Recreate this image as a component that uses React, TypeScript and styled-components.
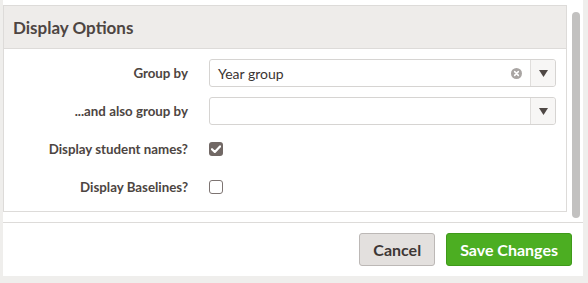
import React, { useState } from "react";
import styled, { createGlobalStyle } from "styled-components";

const GlobalStyle = createGlobalStyle`
   html, body {
      margin: 0;
      padding: 0;
      background: #efeeec;
      font-family: "Lato", "Liberation Sans", sans-serif;
      color: #4d4542;
   }
`;

type SelectProps = {
   value: string;
   clearable?: boolean;
};

function SelectBox({ value, clearable }: SelectProps) {
   return (
      <StyledSelect>
         <div className="value">{value}</div>
         {clearable && value && (
            <ClearIcon viewBox="0 0 12 12" aria-label="clear">
               <circle cx="6" cy="6" r="6" fill="#a9a5a3" />
               <path d="M4 4 L8 8 M8 4 L4 8" stroke="#fff" strokeWidth="1.7" strokeLinecap="round" />
            </ClearIcon>
         )}
         <StyledArrow>
            <svg width="9" height="7" viewBox="0 0 9 7">
               <path d="M0 0 H9 L4.5 7 Z" fill="#4f4845" />
            </svg>
         </StyledArrow>
      </StyledSelect>
   );
}

function Checkbox({ checked, onToggle }: { checked: boolean; onToggle: () => void }) {
   return (
      <StyledCheckbox checked={checked} onClick={onToggle}>
         {checked && (
            <svg width="10" height="8" viewBox="0 0 10 8">
               <path d="M1 4.2 L3.8 7 L9 1.4" stroke="#fff" strokeWidth="2.2" fill="none" strokeLinecap="round" strokeLinejoin="round" />
            </svg>
         )}
      </StyledCheckbox>
   );
}

function App() {
   const [showNames, setShowNames] = useState<boolean>(true);
   const [showBaselines, setShowBaselines] = useState<boolean>(false);

   return (
      <>
         <GlobalStyle />
         <StyledModal>
            <StyledScrollArea>
               <StyledScrollContent>
                  <StyledPanel>
                     <StyledPanelHeader>Display Options</StyledPanelHeader>
                     <StyledForm>
                        <StyledLabel>Group by</StyledLabel>
                        <SelectBox value="Year group" clearable />

                        <StyledLabel>...and also group by</StyledLabel>
                        <SelectBox value="" />

                        <StyledLabel>Display student names?</StyledLabel>
                        <StyledCheckCell>
                           <Checkbox checked={showNames} onToggle={() => setShowNames(!showNames)} />
                        </StyledCheckCell>

                        <StyledLabel>Display Baselines?</StyledLabel>
                        <StyledCheckCell>
                           <Checkbox checked={showBaselines} onToggle={() => setShowBaselines(!showBaselines)} />
                        </StyledCheckCell>
                     </StyledForm>
                  </StyledPanel>
               </StyledScrollContent>
               {/* drawn scrollbar, the headless browser hides native ones */}
               <StyledScrollTrack>
                  <div className="thumb" />
               </StyledScrollTrack>
            </StyledScrollArea>

            <StyledFooter>
               <StyledButton variant="default">Cancel</StyledButton>
               <StyledButton variant="primary">Save Changes</StyledButton>
            </StyledFooter>
         </StyledModal>
      </>
   );
}

export default App;

const StyledModal = styled.div`
   width: 580px;
   height: 276px;
   margin-left: 3px;
   background: #fff;
   display: flex;
   flex-direction: column;
`;

const StyledScrollArea = styled.div`
   height: 222px;
   display: flex;
`;

const StyledScrollContent = styled.div`
   flex: 1;
   overflow: hidden;
   padding: 5px 4px 0 0;
`;

const StyledScrollTrack = styled.div`
   width: 12px;
   box-sizing: border-box;
   padding: 12px 3px 4px 1px;
   display: flex;

   .thumb {
      flex: 1;
      background: #c2c1c0;
      border-radius: 4px;
   }
`;

const StyledPanel = styled.div`
   border: 1px solid #dddbd9;
`;

const StyledPanelHeader = styled.div`
   background: #eeecea;
   border-bottom: 1px solid #dddbd9;
   height: 42px;
   display: flex;
   align-items: center;
   padding-left: 9px;
   font-size: 17px;
   font-weight: 700;
   color: #4d4542;
`;

const StyledForm = styled.div`
   display: grid;
   grid-template-columns: 184px 1fr;
   grid-auto-rows: 28px;
   column-gap: 21px;
   row-gap: 10px;
   padding: 10px 10px 10px 0;
`;

const StyledLabel = styled.div`
   display: flex;
   align-items: center;
   justify-content: flex-end;
   font-size: 13.3px;
   font-weight: 700;
   color: #4d4542;
`;

const StyledSelect = styled.div`
   display: flex;
   align-items: center;
   border: 1px solid #d6d4d2;
   border-radius: 3px;
   background: #fff;
   box-sizing: border-box;
   height: 28px;

   .value {
      flex: 1;
      padding-left: 8px;
      font-size: 14px;
      color: #3a3432;
   }
`;

const ClearIcon = styled.svg`
   width: 11px;
   height: 11px;
   margin-right: 8px;
`;

const StyledArrow = styled.div`
   width: 24px;
   align-self: stretch;
   display: flex;
   align-items: center;
   justify-content: center;
   border-left: 1px solid #e0dedc;
   background: #f7f6f5;
   border-radius: 0 3px 3px 0;
`;

const StyledCheckCell = styled.div`
   display: flex;
   align-items: center;
`;

const StyledCheckbox = styled.div<{ checked: boolean }>`
   width: 14px;
   height: 14px;
   box-sizing: border-box;
   border-radius: 3px;
   display: flex;
   align-items: center;
   justify-content: center;
   cursor: pointer;
   background: ${(p) => (p.checked ? "#716865" : "#fff")};
   border: ${(p) => (p.checked ? "none" : "1.5px solid #7d7472")};
`;

const StyledFooter = styled.div`
   flex: 1;
   border-top: 1px solid #dddbd9;
   display: flex;
   align-items: center;
   justify-content: flex-end;
   gap: 11px;
   padding-right: 11px;
`;

const StyledButton = styled.button<{ variant: "default" | "primary" }>`
   height: 33px;
   padding: 0 13px;
   border-radius: 3px;
   font-family: inherit;
   font-size: 16px;
   font-weight: 700;
   cursor: pointer;
   background: ${(p) => (p.variant === "primary" ? "#4cae22" : "#e3e0de")};
   border: 1px solid ${(p) => (p.variant === "primary" ? "#3f9a1a" : "#bcb8b6")};
   color: ${(p) => (p.variant === "primary" ? "#fff" : "#3d3735")};
`;
